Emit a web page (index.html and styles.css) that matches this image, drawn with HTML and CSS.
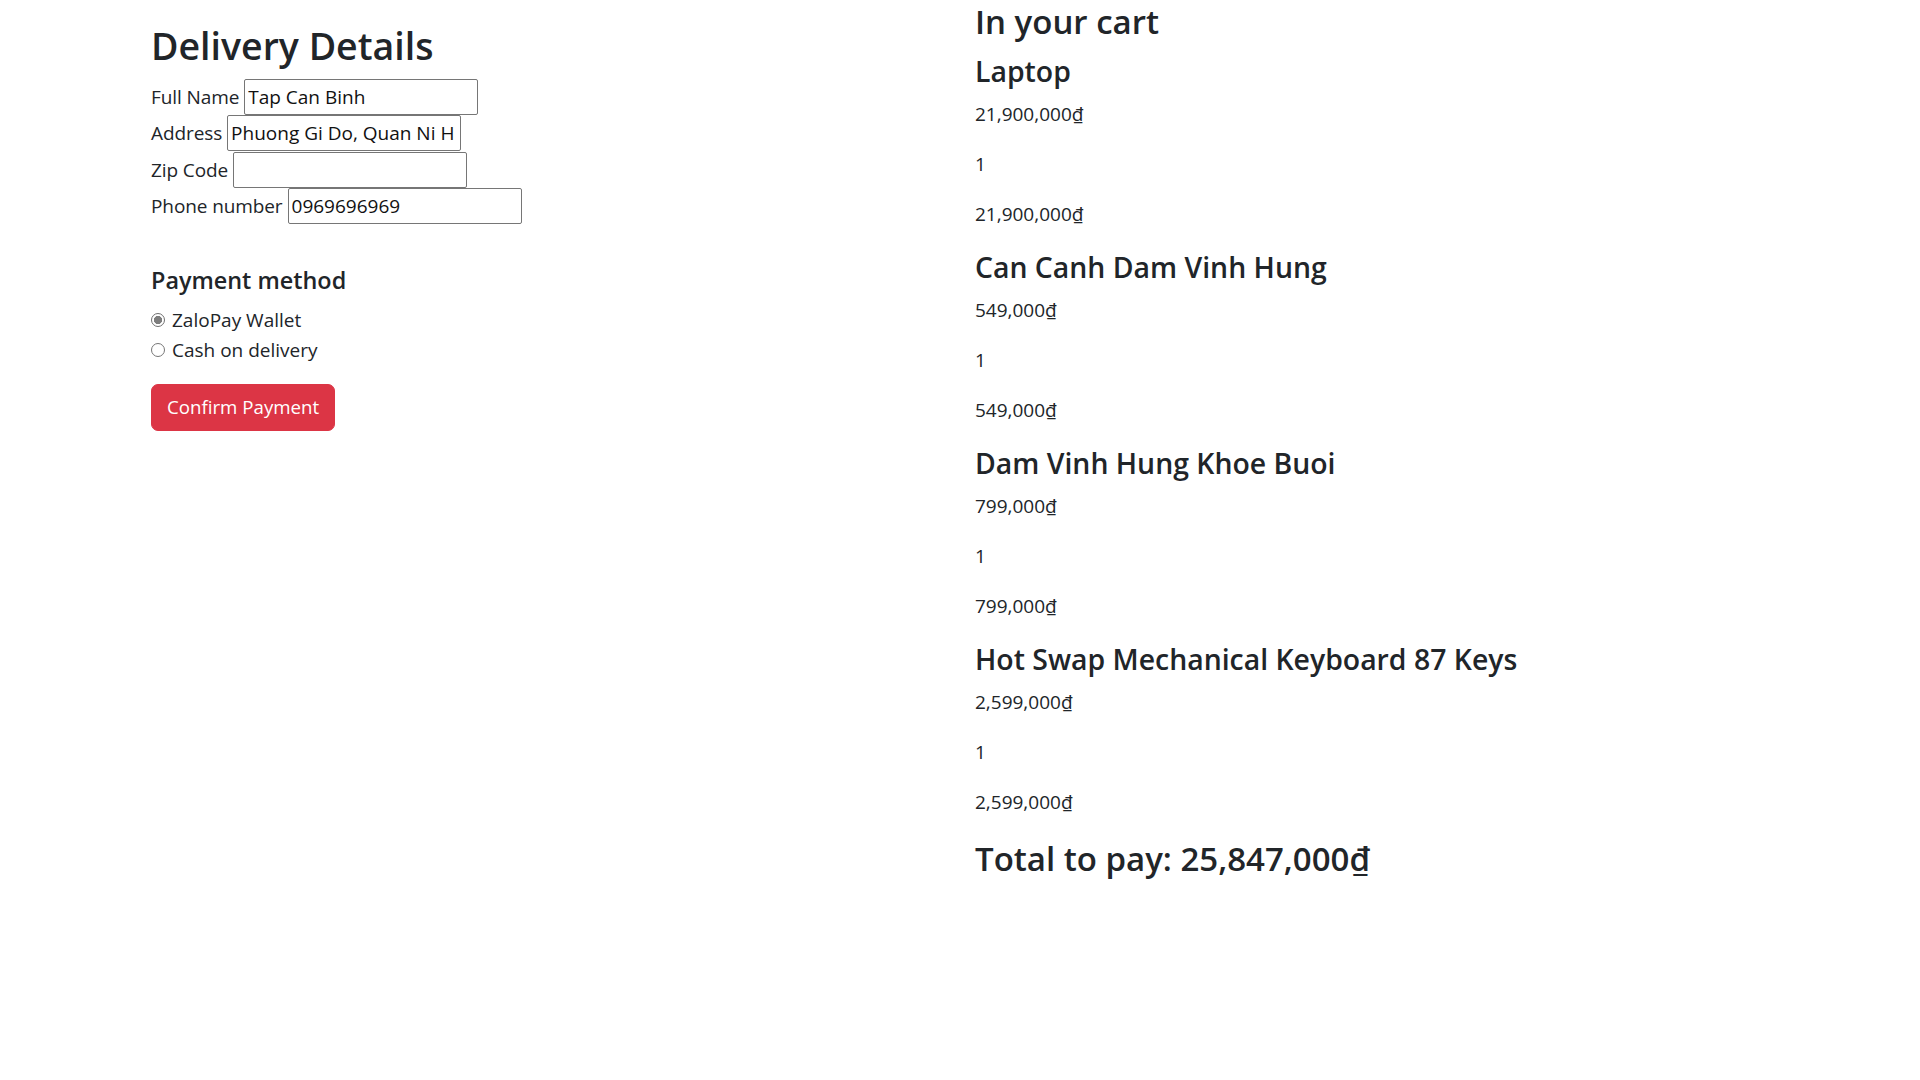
FILE: index.html
```html
<!DOCTYPE html>
<html lang="en">
<head>
<meta charset="utf-8">
<title>Checkout</title>
<link rel="stylesheet" href="styles.css">
</head>
<body>
<main class="checkout">
  <section class="delivery">
    <h1 class="title">Delivery Details</h1>
    <form class="details">
      <div class="field"><label for="name">Full Name</label><input id="name" type="text" value="Tap Can Binh"></div>
      <div class="field"><label for="address">Address</label><input id="address" type="text" value="Phuong Gi Do, Quan Ni H"></div>
      <div class="field"><label for="zip">Zip Code</label><input id="zip" type="text" value=""></div>
      <div class="field"><label for="phone">Phone number</label><input id="phone" type="text" value="0969696969"></div>
    </form>
    <h4 class="subtitle">Payment method</h4>
    <div class="option"><input type="radio" name="pay" id="zalo" checked><label for="zalo">ZaloPay Wallet</label></div>
    <div class="option"><input type="radio" name="pay" id="cod"><label for="cod">Cash on delivery</label></div>
    <button class="confirm" type="button">Confirm Payment</button>
  </section>
  <section class="cart">
    <h2 class="cart-title">In your cart</h2>
    <div class="item">
      <h3 class="item-name">Laptop</h3>
      <p>21,900,000₫</p>
      <p>1</p>
      <p>21,900,000₫</p>
    </div>
    <div class="item">
      <h3 class="item-name">Can Canh Dam Vinh Hung</h3>
      <p>549,000₫</p>
      <p>1</p>
      <p>549,000₫</p>
    </div>
    <div class="item">
      <h3 class="item-name">Dam Vinh Hung Khoe Buoi</h3>
      <p>799,000₫</p>
      <p>1</p>
      <p>799,000₫</p>
    </div>
    <div class="item">
      <h3 class="item-name">Hot Swap Mechanical Keyboard 87 Keys</h3>
      <p>2,599,000₫</p>
      <p>1</p>
      <p>2,599,000₫</p>
    </div>
    <h2 class="total">Total to pay: 25,847,000₫</h2>
  </section>
</main>
</body>
</html>
```
FILE: styles.css
```css
* { box-sizing: border-box; }
html, body { margin: 0; background: #fff; }
body {
  font-family: "Open Sans", "Noto Sans", sans-serif;
  font-size: 19px;
  line-height: 30px;
  color: #212529;
}
.checkout {
  display: grid;
  grid-template-columns: 975px 1fr;
}
.delivery {
  padding: 24.2px 0 0 151px;
}
.title {
  margin: 0 0 10.8px;
  font-size: 37.5px;
  line-height: 44px;
  font-weight: 600;
}
.details {
  display: flex;
  flex-direction: column;
}
.field {
  display: flex;
  align-items: center;
  gap: 5px;
  height: 36.33px;
}
.field label { letter-spacing: -0.1px; }
.field input {
  width: 234px;
  height: 36px;
  margin: 0;
  padding: 1px 3px;
  border: 1px solid #767676;
  border-radius: 2px;
  font: inherit;
  color: #111;
  background: #fff;
}
.subtitle {
  margin: 41.6px 0 10px;
  font-size: 23.4px;
  line-height: 29px;
  font-weight: 600;
}
.option {
  display: flex;
  align-items: center;
  height: 30px;
}
.option input {
  appearance: none;
  -webkit-appearance: none;
  width: 14px;
  height: 14px;
  margin: 0 7px 0 0;
  border: 1px solid #767676;
  border-radius: 50%;
  background: #fff;
}
.option input:checked {
  border-color: #6f6f6f;
  background: radial-gradient(circle, #7d7d7d 0 3.8px, #fff 4.4px);
}
.confirm {
  display: block;
  margin-top: 19px;
  padding: 7.5px 15px;
  border: 1px solid #dc3545;
  border-radius: 7px;
  background: #dc3545;
  color: #fff;
  font: inherit;
  font-size: 18.7px;
  line-height: 30px;
}
.cart { padding-top: 2px; }
.cart-title {
  margin: 0 0 11.5px;
  font-size: 33px;
  line-height: 40px;
  font-weight: 600;
}
.item-name {
  margin: 0 0 10.9px;
  padding-top: 0.5px;
  font-size: 28.4px;
  line-height: 34px;
  font-weight: 600;
}
.item p { margin: 0 0 20px; }
.item p:last-child { margin-bottom: 20.6px; }
.total {
  margin: 21.8px 0 0;
  font-size: 33px;
  line-height: 40px;
  font-weight: 600;
}
```
